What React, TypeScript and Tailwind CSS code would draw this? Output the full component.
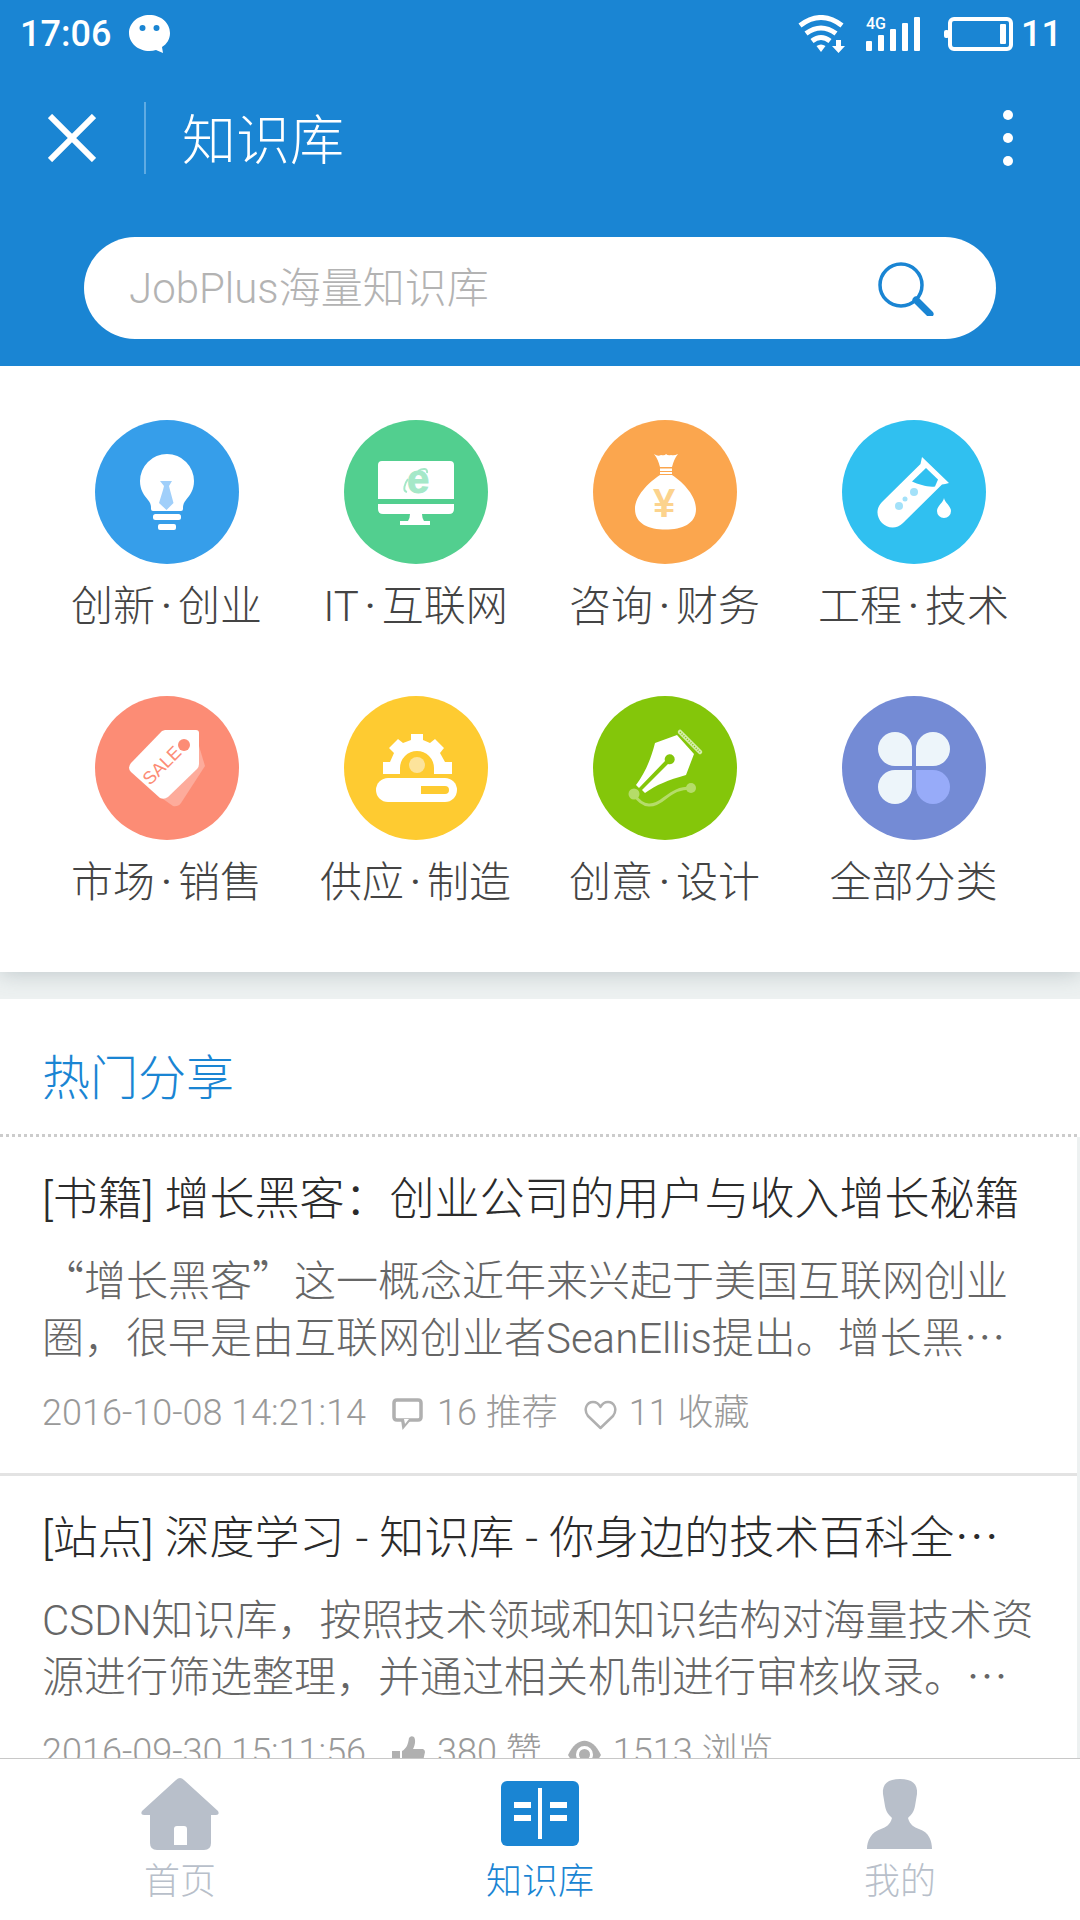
import React from 'react';

interface Category {
  label: string;
  color: string;
  icon: React.ReactNode;
}

interface Stat {
  icon: React.ReactNode;
  text: string;
}

interface Article {
  title: React.ReactNode;
  summary: React.ReactNode;
  date: string;
  stats: Stat[];
}

// Punctuation that has to take the full-width CJK shape instead of Roboto's
function Cjk({ children }: { children: React.ReactNode }) {
  return <span className="font-['Noto_Sans_CJK_SC',sans-serif] leading-none">{children}</span>;
}

const categories: Category[] = [
  {
    label: '创新·创业',
    color: 'bg-[#369eea]',
    icon: (
      <>
        <path fill="#fff" d="M72 34a27 27 0 0 1 27 27c0 9-4 14-8 19q-3 3-3 8v1q0 2-2 2H58q-2 0-2-2v-1q0-5-3-8c-4-5-8-10-8-19a27 27 0 0 1 27-27z" />
        <rect x="58" y="94" width="28" height="6" rx="2.500" fill="#fff" />
        <rect x="63" y="104" width="18" height="6" rx="2" fill="#fff" />
        <path fill="#a0cffa" d="M65 61h12l-3 5 1 4 3.500 13-7 7-7.500-7L68 70l1-4z" />
      </>
    ),
  },
  {
    label: 'IT·互联网',
    color: 'bg-[#52cf8f]',
    icon: (
      <>
        <path fill="#fff" d="M38 41h68q4 0 4 4v34H34V45q0-4 4-4zM34 84h76v5q0 5-5 5H78q0 4 2 7h6v4H56v-4h8q2-3 2-7H39q-5 0-5-5z" />
        <text x="63" y="73" fontSize="40" fontWeight="700" fill="#a5e8c8" stroke="#a5e8c8" strokeWidth="1" fontFamily="Liberation Sans">e</text>
        <path d="M63 72c-5-1-2-9 1-13M74 51c5-3 10-3 9 2" fill="none" stroke="#a5e8c8" strokeWidth="2" />
      </>
    ),
  },
  {
    label: '咨询·财务',
    color: 'bg-[#fba64e]',
    icon: (
      <>
        <path fill="#fff" d="M61 34q4 3 7 1 4 1 5-1 2 2 5 1 3 1 7-1-4 5-6 13H67q-2-8-6-13zM67 48.500h12v2.500H67zM67 52h12v2H67zM67 55h12c12 8 24 21 24 34 0 15-14 20.500-30.500 20.500S42 104 42 89c0-13 13-26 25-34z" />
        <text x="60" y="97" fontSize="40" fontWeight="700" fill="#fcd38d" fontFamily="Liberation Sans">¥</text>
      </>
    ),
  },
  {
    label: '工程·技术',
    color: 'bg-[#30c0f0]',
    icon: (
      <>
        <path fill="#fff" d="M80 37l27 26q-4 1-7 1.500L61 103c-7 7-16 5-21 0s-7-14 0-21l38.500-38z" />
        <path fill="#30c0f0" d="M84 48l12 11.500-3 7c-7 1-16-2-23-5z" />
        <circle cx="72" cy="72" r="4" fill="#a3e1f9" />
        <circle cx="63" cy="79" r="2.500" fill="#a3e1f9" />
        <circle cx="57" cy="86" r="4" fill="#a3e1f9" />
        <path fill="#fff" d="M102 78c1 5 7 8 7 13a7 7 0 0 1-14 0c0-5 6-8 7-13z" />
      </>
    ),
  },
  {
    label: '市场·销售',
    color: 'bg-[#fc8c75]',
    icon: (
      <>
        <path fill="#fdab9b" d="M104 50l6 20-24 37q-3 4-8 3l-10-7z" />
        <path fill="#fff" d="M70 34h31q3 0 3 3v31q0 3-2 5L73 101q-4 3-8 1L36 76q-4-4 0-9l31-32z" />
        <circle cx="89" cy="49" r="6" fill="#fc8c75" />
        <text transform="translate(55 90) rotate(-45)" fontSize="18" fill="#fc8c75" fontFamily="Liberation Sans">SALE</text>
      </>
    ),
  },
  {
    label: '供应·制造',
    color: 'bg-[#fecb31]',
    icon: (
      <>
        <path fill="#fff" d="M67 38h12v6l7 3 5-4 9 9-4 5 5 9h7v12H90v-6a17 17 0 0 0-34 0v6H39V66h7l4-9-5-5 9-9 5 4 8-3z" />
        <circle cx="73" cy="69" r="8" fill="#fce39b" />
        <rect x="32" y="82" width="81" height="24" rx="12" fill="#fff" />
        <path fill="#fecb31" d="M77 90h24a4 4 0 0 1 0 8H77z" />
      </>
    ),
  },
  {
    label: '创意·设计',
    color: 'bg-[#84c60a]',
    icon: (
      <>
        <path d="M41 98c9 15 20 13 31 4 8-6 14-10 26-10" fill="none" stroke="#b5dc69" strokeWidth="3" />
        <circle cx="41" cy="98" r="5.500" fill="#b5dc69" />
        <circle cx="98" cy="92" r="5" fill="#b5dc69" />
        <path fill="#fff" d="M84 39l17 19-8 21c-18 5-30 10-41 18l-3-3 26-26a5 5 0 1 0-3-3L46 92l-3-3c9-12 15-26 19-42z" />
        <path d="M87 36l20 20" stroke="#d4edab" strokeWidth="4.500" strokeLinecap="round" />
        <path d="M87 36l20 20" stroke="#84c60a" strokeWidth="1.500" strokeDasharray="1 1.500" />
      </>
    ),
  },
  {
    label: '全部分类',
    color: 'bg-[#748bd5]',
    icon: (
      <>
        <path fill="#edf5fa" d="M70 70H53a17 17 0 1 1 17-17zM74 70V53a17 17 0 1 1 17 17zM70 74v17a17 17 0 1 1-17-17z" />
        <path fill="#97abf9" d="M74 74h17a17 17 0 1 1-17 17z" />
      </>
    ),
  },
];

const commentIcon = (
  <>
    <path d="M5 3h21q3 0 3 3v14q0 3-3 3H5q-3 0-3-3V6q0-3 3-3z" fill="none" stroke="#b0b0b0" strokeWidth="3.500" />
    <path d="M9 23h10l-8.500 10z" fill="#b0b0b0" />
    <path d="M12 22h5l-4 5z" fill="#fff" />
  </>
);
const heartIcon = (
  <path d="M16.500 31L4 19C-1 12 3 5 9 5c4 0 6 2 7.500 5C18 7 20 5 24 5c6 0 10 7 5 14z" fill="none" stroke="#b0b0b0" strokeWidth="2.500" strokeLinejoin="round" />
);
const thumbIcon = (
  <path d="M0 15h8v18H0zM10 15c4-2 6-6 7-13q2-3 5-1c2 3 1 8-1 12h10q2 1 2 3l-3 14q-1 3-4 3H10z" fill="#b0b0b0" />
);
const eyeIcon = (
  <>
    <path d="M0 19C9 0 24 0 33 19 24 35 9 35 0 19z" fill="#b0b0b0" />
    <circle cx="16.500" cy="18.500" r="7" fill="#b0b0b0" stroke="#fff" strokeWidth="3" />
  </>
);

const articles: Article[] = [
  {
    title: '[书籍] 增长黑客：创业公司的用户与收入增长秘籍',
    summary: (
      <>
        <Cjk>“</Cjk>增长黑客<Cjk>”</Cjk>这一概念近年来兴起于美国互联网创业圈，很早是由互联网创业者SeanEllis提出。增长黑<Cjk>…</Cjk>
      </>
    ),
    date: '2016-10-08 14:21:14',
    stats: [
      { icon: commentIcon, text: '16 推荐' },
      { icon: heartIcon, text: '11 收藏' },
    ],
  },
  {
    title: (
      <>
        [站点] 深度学习 - 知识库 - 你身边的技术百科全<Cjk>…</Cjk>
      </>
    ),
    summary: (
      <>
        CSDN知识库，按照技术领域和知识结构对海量技术资源进行筛选整理，并通过相关机制进行审核收录。<Cjk>…</Cjk>
      </>
    ),
    date: '2016-09-30 15:11:56',
    stats: [
      { icon: thumbIcon, text: '380 赞' },
      { icon: eyeIcon, text: '1513 浏览' },
    ],
  },
];

const tabs = [
  {
    label: '首页',
    active: false,
    icon: (
      <path fill="currentColor" fillRule="evenodd" d="M39 0q2 0 4 2l34 31q2 4-2 4h-5v28q0 7-7 7H16q-7 0-7-7V37H3q-4 0-2-4L35 2q2-2 4-2zM36 48q-3 0-3 3v16h13V51q0-3-3-3z" />
    ),
  },
  {
    label: '知识库',
    active: true,
    icon: (
      <>
        <rect y="3" width="78" height="65" rx="6" fill="currentColor" />
        <path fill="#fff" d="M37 10h4v51h-4zM13 24h17v6H13zM13 37h17v6H13zM49 24h17v6H49zM49 37h17v6H49z" />
      </>
    ),
  },
  {
    label: '我的',
    active: false,
    icon: (
      <path fill="currentColor" d="M39 1c12 0 18 5 17 15l-2 12c-1 6-4 9-7 12 2 7 6 9 11 11 10 3 13 12 13 20H6c0-8 4-17 14-20 5-2 9-4 11-11-3-3-6-6-7-12l-2-12C21 6 27 1 39 1z" />
    ),
  },
];

function StatusBar() {
  return (
    <div className="flex h-[68px] items-center justify-between pr-[18px] pl-5 text-4xl font-medium">
      <div className="flex items-center gap-[18px]">
        <span>17:06</span>
        <svg className="h-[38px] w-[41px]" viewBox="0 0 41 38">
          <path fill="#fff" fillRule="evenodd" d="M20.500 0C32 0 41 8 41 18c0 6-3 11-8 14l1 6-7-3q-3 1-6.500 1C9 36 0 28 0 18S9 0 20.500 0zM13.500 10a3 3 0 1 0 0 6 3 3 0 0 0 0-6zm14 0a3 3 0 1 0 0 6 3 3 0 0 0 0-6z" />
        </svg>
      </div>
      <div className="flex items-center">
        <svg className="mr-5 h-[38px] w-[48px]" viewBox="0 0 48 38" fill="none" stroke="#fff" strokeWidth="5">
          <path d="M2 10.500q21-16 42 0M8 18.500q15-11 30 0M14 26q9-7 18 0" />
          <path d="M18.500 31q4.500-3 9 0L23 37z" fill="#fff" stroke="none" />
          <path d="M38 25h5v6h4l-6.500 7-6.500-7h4z" fill="#fff" stroke="none" />
        </svg>
        <svg className="mr-6 h-[36px] w-[54px] overflow-visible" viewBox="0 0 54 36" fill="#fff">
          <text x="0" y="13" fontSize="16" fontWeight="500" fontFamily="Roboto">4G</text>
          <rect y="25" width="6" height="10" rx="1" />
          <rect x="12" y="19" width="6" height="16" rx="1" />
          <rect x="24" y="13" width="6" height="22" rx="1" />
          <rect x="36" y="7" width="6" height="28" rx="1" />
          <rect x="48" y="1" width="6" height="34" rx="1" />
        </svg>
        <svg className="mr-2 h-[34px] w-[69px]" viewBox="0 0 69 34">
          <rect x="6" y="2" width="61" height="30" rx="4" fill="none" stroke="#fff" strokeWidth="4" />
          <rect y="13" width="5" height="8" rx="2" fill="#fff" />
          <rect x="56" y="7" width="6" height="20" rx="1" fill="#fff" />
        </svg>
        <span>11</span>
      </div>
    </div>
  );
}

export default function App() {
  return (
    <div className="flex h-screen flex-col overflow-hidden bg-[#edf1f1] font-[Roboto,'Noto_Sans_CJK_SC',sans-serif] font-light" lang="zh-CN">
      <header className="shrink-0 bg-[#1a85d3] text-white">
        <StatusBar />

        <div className="flex h-[140px] items-center pr-[67px] pl-12">
          <button aria-label="关闭" className="mr-12">
            <svg className="size-12" viewBox="0 0 48 48" stroke="#fff" strokeWidth="6">
              <path d="M2 2l44 44M46 2L2 46" />
            </svg>
          </button>
          <span className="h-18 w-[2px] bg-[#5fabe3]" />
          <h1 className="ml-9 flex-1 pt-2 text-[54px] leading-none">知识库</h1>
          <button aria-label="更多">
            <svg className="h-[58px] w-[10px]" viewBox="0 0 10 58" fill="#fff">
              <circle cx="5" cy="6" r="5" />
              <circle cx="5" cy="29" r="5" />
              <circle cx="5" cy="52" r="5" />
            </svg>
          </button>
        </div>

        <div className="px-[84px] pt-[29px] pb-[27px]">
          <form className="flex h-[102px] items-center rounded-full bg-white pr-[62px] pl-[45px]" onSubmit={(e) => e.preventDefault()}>
            <input
              type="text"
              aria-label="搜索"
              placeholder="JobPlus海量知识库"
              className="min-w-0 flex-1 text-[42px] text-gray-800 outline-none placeholder:text-[#b3b3b3]"
            />
            <button aria-label="搜索">
              <svg className="size-14" viewBox="0 0 56 56" fill="none" stroke="#1a85d3">
                <circle cx="23" cy="25" r="21" strokeWidth="3.500" />
                <path d="M38 40l14 14" strokeWidth="7" strokeLinecap="round" />
              </svg>
            </button>
          </form>
        </div>
      </header>

      <main className="min-h-0 flex-1 overflow-hidden">
        <section className="grid grid-cols-4 gap-y-[59px] bg-white pt-[54px] pr-[42px] pb-[59px] pl-[42px] shadow-[0_2px_20px_rgba(90,110,120,0.3)]">
          {categories.map((c) => (
            <a key={c.label} href="#" className="flex flex-col items-center gap-[13px] text-[#444]">
              <span className={`size-36 rounded-full ${c.color}`}>
                <svg viewBox="0 0 144 144">{c.icon}</svg>
              </span>
              <span className="text-[42px] leading-[60px] whitespace-nowrap">
                {c.label.split('·').map((part, i) => (
                  <React.Fragment key={part + i}>
                    {i > 0 && <span className="mx-1.5 font-normal">·</span>}
                    {part}
                  </React.Fragment>
                ))}
              </span>
            </a>
          ))}
        </section>

        <section className="relative mt-[27px]">
          <h2 className="bg-white px-[42px] pt-[50px] pb-[25px] text-5xl leading-[60px] text-[#1a85d3]">
            热门分享
          </h2>
          <hr className="h-[3px] border-0 bg-[repeating-linear-gradient(90deg,#ccc_0_3px,#fff_3px_6px)]" />
          {articles.map((a) => (
            <article key={a.date} className="mr-[3px] border-b-3 border-[#e3e3e3] bg-white px-[42px] pt-[33px] pb-9">
              <h3 className="text-[45px] leading-[60px] whitespace-nowrap text-[#2b2b2b]">{a.title}</h3>
              <p className="mt-[23px] text-[42px] leading-[57px] text-[#666]">{a.summary}</p>
              <div className="mt-[22px] flex items-center gap-[26px] text-4xl leading-[48px] text-[#999]">
                <time>{a.date}</time>
                {a.stats.map((s) => (
                  <span key={s.text} className="flex items-center gap-3">
                    <svg className="size-[33px]" viewBox="0 0 33 33">{s.icon}</svg>
                    {s.text}
                  </span>
                ))}
              </div>
            </article>
          ))}
        </section>
      </main>

      <nav className="grid shrink-0 grid-cols-3 border-t border-[#c8c8c8] bg-white pt-[19px] pb-3.5">
        {tabs.map((t) => (
          <a key={t.label} href="#" className={`flex flex-col items-center gap-2 ${t.active ? 'text-[#1a85d3]' : 'text-[#b8bfca]'}`}>
            <svg className="h-[72px] w-[78px]" viewBox="0 0 78 72">{t.icon}</svg>
            <span className="text-4xl leading-[48px]">{t.label}</span>
          </a>
        ))}
      </nav>
    </div>
  );
}
